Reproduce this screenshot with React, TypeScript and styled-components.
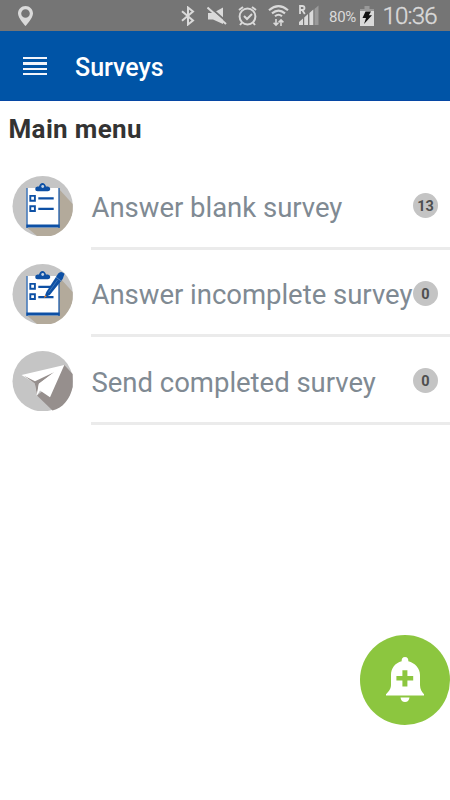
import React from 'react';
import styled, { createGlobalStyle } from 'styled-components';

const GlobalStyle = createGlobalStyle`
  * { box-sizing: border-box; }
  body { margin: 0; background: #fff; font-family: Roboto, sans-serif; }
`;

const Screen = styled.div`
  position: relative;
  width: 450px;
  height: 800px;
  overflow: hidden;
  background: #fff;
`;

const StatusBar = styled.div`
  display: flex;
  align-items: center;
  height: 31px;
  background: #757575;
  color: #dadada;
`;

const StatusIcon = styled.svg<{ $gap?: number }>`
  flex: none;
  display: block;
  margin-left: ${(p) => p.$gap ?? 0}px;
`;

const BatteryLevel = styled.span`
  width: 28px;
  margin-left: 9px;
  padding-top: 2px;
  font-size: 15px;
  letter-spacing: -0.3px;
  white-space: nowrap;
`;

const Clock = styled.span`
  margin-left: 8.5px;
  padding-top: 2px;
  font-size: 24px;
  font-weight: 300;
  letter-spacing: -0.8px;
  line-height: 29px;
  -webkit-text-stroke: 0.4px #dadada;
`;

const AppBar = styled.header`
  display: flex;
  align-items: center;
  height: 70px;
  padding-left: 23px;
  background: #0054a6;
  border-bottom: 1px solid #0648a4;
`;

const MenuButton = styled.button`
  display: flex;
  flex-direction: column;
  gap: 3px;
  width: 24px;
  margin: 1px 28px 0 0;
  padding: 0;
  border: 0;
  background: none;
`;

const MenuLine = styled.span`
  height: 2.25px;
  background: #f2f5fb;
`;

const Title = styled.h1`
  margin: 4px 0 0;
  color: #fff;
  font-size: 25px;
  font-weight: 500;
  line-height: 30px;
`;

const SectionTitle = styled.h2`
  height: 61px;
  margin: 0;
  padding: 12px 0 0 8.5px;
  color: #333;
  font-size: 26px;
  font-weight: 700;
  letter-spacing: 0.35px;
  line-height: 32px;
`;

const Menu = styled.ul`
  margin: 0;
  padding: 0;
  list-style: none;
`;

const Row = styled.li`
  display: flex;
  height: 87.5px;
  padding-left: 12px;
`;

const RowIcon = styled.svg`
  flex: none;
  display: block;
  width: 61px;
  height: 60px;
  margin: 14px 18px 0 0;
`;

const RowBody = styled.div`
  display: flex;
  flex: 1;
  align-items: center;
  justify-content: space-between;
  min-width: 0;
  padding: 3px 12px 0 0.5px;
  border-bottom: 3px solid #ebebeb;
`;

const Label = styled.span`
  padding-top: 4px;
  color: #808a93;
  font-size: 27.5px;
  letter-spacing: -0.02px;
  line-height: 34px;
  white-space: nowrap;
`;

const Count = styled.span`
  flex: none;
  width: 25px;
  height: 25px;
  margin-left: -6px;
  border-radius: 50%;
  background: #c4c4c4;
  color: #4f4f4f;
  font-size: 14.5px;
  font-weight: 700;
  line-height: 27px;
  text-align: center;
`;

const AlertButton = styled.button`
  position: absolute;
  right: 0;
  top: 635px;
  display: flex;
  align-items: center;
  justify-content: center;
  width: 90px;
  height: 90px;
  padding: 0;
  border: 0;
  border-radius: 50%;
  background: #8cc63f;
`;

const Clipboard = ({ pen = false }: { pen?: boolean }) => (
  <RowIcon viewBox="0 0 61 60">
    <circle cx="30.7" cy="30.2" r="30.2" fill="#c5c5c5" />
    <path d="M47 13L60.7 28V35C59.5 46 50 57.5 39 60H25L15 51.5Z" fill="#b3aa9b" />
    <path d="M14.5 12H47V51.5H14.5Z" fill="#fff" />
    <path d="M15 12V52M47 12V52" stroke="#0d50a5" strokeWidth="1.2" />
    <path d="M14.4 50H47.6" stroke="#0d50a5" strokeWidth="2.8" />
    <path d="M27 10.5Q28 7 30.5 7T34 10.5H36Q38.3 11 38.3 13T36 15.2H25.5Q23.2 15.2 23.2 13T25.5 10.5Z" fill="#0d50a5" />
    <circle cx="30.7" cy="10.5" r="1.4" fill="#c5d4e5" />
    <path d="M18.3 19.9H22.9V24.7H18.3ZM18.3 30.2H22.9V35H18.3Z" fill="none" stroke="#0d50a5" strokeWidth="1.9" />
    <path d={pen ? 'M26.3 22.9H40M26.3 33.1H41.5' : 'M26.3 22.4H41.7M26.3 32.9H41.7'} stroke="#0d50a5" strokeWidth="2.1" />
    {pen && (
      <g>
        <path d="M32.3 33.5L34.3 28L46.2 9.5Q49 6.3 52.5 9.8L50.7 15L37.8 31Z" fill="#0d50a5" />
        <path d="M36.5 28.5L45.5 16" stroke="#477dbd" strokeWidth=".8" />
        <path d="M44 13.3L49.5 17.2" stroke="#7198c8" strokeWidth=".7" />
        <path d="M31.8 34L33.2 31L34.7 32.4Z" fill="#f58220" />
      </g>
    )}
  </RowIcon>
);

const PaperPlane = () => (
  <RowIcon viewBox="0 0 61 60">
    <circle cx="30.7" cy="30.2" r="30.2" fill="#c5c5c5" />
    <path d="M52.3 14L60.7 23V36C58 48 51 57 40.5 59.5L25 44.5L38 34Z" fill="#968f8d" />
    <path d="M9.5 24L52.3 14L38 46.3L28 39.5L24.8 44.7L22.8 32.3Z" fill="#fff" />
    <path d="M12 24.7L23 30.3L42 21.3L26.8 32.7L24.8 43.5L22.8 32.5Z" fill="#968f8d" />
    <path d="M27 32.8L42 21.4L29 35.5L25.3 43.5Z" fill="#fff" />
  </RowIcon>
);

const items = [
  { label: 'Answer blank survey', count: 13, icon: <Clipboard /> },
  { label: 'Answer incomplete survey', count: 0, icon: <Clipboard pen /> },
  { label: 'Send completed survey', count: 0, icon: <PaperPlane /> },
];

export default function App() {
  return (
    <Screen>
      <GlobalStyle />
      <StatusBar>
        <StatusIcon $gap={18} width="15" height="20" viewBox="0 0 15 20">
          <path fillRule="evenodd" fill="#dadada" d="M7.5 0C3.3 0 0 3.3 0 7.4C0 12 7.5 20 7.5 20S15 12 15 7.4C15 3.3 11.7 0 7.5 0ZM7.5 3.2A4.3 4.3 0 1 1 7.5 11.8A4.3 4.3 0 0 1 7.5 3.2Z" />
        </StatusIcon>
        <StatusIcon $gap={148} width="14" height="20" viewBox="0 0 14 20" fill="none" stroke="#dadada" strokeWidth="2">
          <path d="M1 5.2L12 14.5L7 18.5V1.5L12 5.5L1 14.8" />
        </StatusIcon>
        <StatusIcon $gap={12} width="20" height="20" viewBox="0 0 20 20">
          <path d="M1 7H6L16 1.5V18L6 13.5H1Z" fill="#dadada" />
          <path d="M1.5 0L20 16" stroke="#757575" strokeWidth="2" />
          <path d="M.5 1.5L19 18" stroke="#dadada" strokeWidth="2" />
        </StatusIcon>
        <StatusIcon $gap={11} width="19" height="20" viewBox="0 0 19 20" fill="none" stroke="#dadada" strokeWidth="2">
          <circle cx="9.5" cy="10.5" r="7.9" />
          <path d="M1 4L5 1M18 4L14 1M6 10L9 13L14 8M4 16.5L2 19M15 16.5L17 19" />
        </StatusIcon>
        <StatusIcon $gap={11} width="21" height="22" viewBox="0 0 21 22" fill="none" stroke="#dadada">
          <path d="M1 5.2Q10.5 -2.8 20 5.2M4 8.4Q10.5 2.8 17 8.4M7 11.3Q10.5 8.2 14 11.3" strokeWidth="2.1" />
          <path d="M8 14V20M5.6 17.7L8 20.2L10.4 17.7M13 21V15M10.6 17.4L13 14.9L15.4 17.4" strokeWidth="1.6" />
        </StatusIcon>
        <StatusIcon $gap={10} width="21" height="21" viewBox="0 0 21 21">
          <path d="M1 9V1H3.2Q5.5 1 5.5 3T3.2 5H1M3.2 5L5.8 9" fill="none" stroke="#dadada" strokeWidth="1.8" />
          <path d="M0 17L4 13.5V20H0ZM5.2 12.5L9 9V20H5.2ZM10.4 8L14.3 4.5V20H10.4Z" fill="#dadada" />
          <path d="M15.5 4L19.5 .5V20H15.5Z" fill="#9a9a9a" />
        </StatusIcon>
        <BatteryLevel>80%</BatteryLevel>
        <StatusIcon $gap={3} width="14" height="20" viewBox="0 0 14 20">
          <path d="M4.5 0H9.5V3H14V6H0V3H4.5Z" fill="#999" />
          <path d="M0 5H14V20H0Z" fill="#dadada" />
          <path d="M5.5 5.5H11L8.8 9.2H12L4 18L6 12H2.5Z" fill="#111" />
        </StatusIcon>
        <Clock>10:36</Clock>
      </StatusBar>
      <AppBar>
        <MenuButton aria-label="Menu">
          <MenuLine /><MenuLine /><MenuLine /><MenuLine />
        </MenuButton>
        <Title>Surveys</Title>
      </AppBar>
      <SectionTitle>Main menu</SectionTitle>
      <Menu>
        {items.map((item) => (
          <Row key={item.label}>
            {item.icon}
            <RowBody>
              <Label>{item.label}</Label>
              <Count>{item.count}</Count>
            </RowBody>
          </Row>
        ))}
      </Menu>
      <AlertButton aria-label="Add alert">
        <svg width="38" height="46" viewBox="0 0 38 46">
          <path fill="#fff" fillRule="evenodd" d="M19 0C16.6 0 15.3 2 15.7 4.3C9 6 5 11.5 5 18V28C5 32 2 35.5 0 37.2V38.5H38V37.2C36 35.5 34 32 34 28V18C34 11.5 29 6 22.3 4.3C22.7 2 21.4 0 19 0ZM16.4 13.2H21.4V19H27.2V23.5H21.4V29.6H16.4V23.5H10.4V19H16.4Z" />
          <path fill="#fff" d="M14.5 40.5H23.5Q22.7 45 19 45T14.5 40.5Z" />
        </svg>
      </AlertButton>
    </Screen>
  );
}
